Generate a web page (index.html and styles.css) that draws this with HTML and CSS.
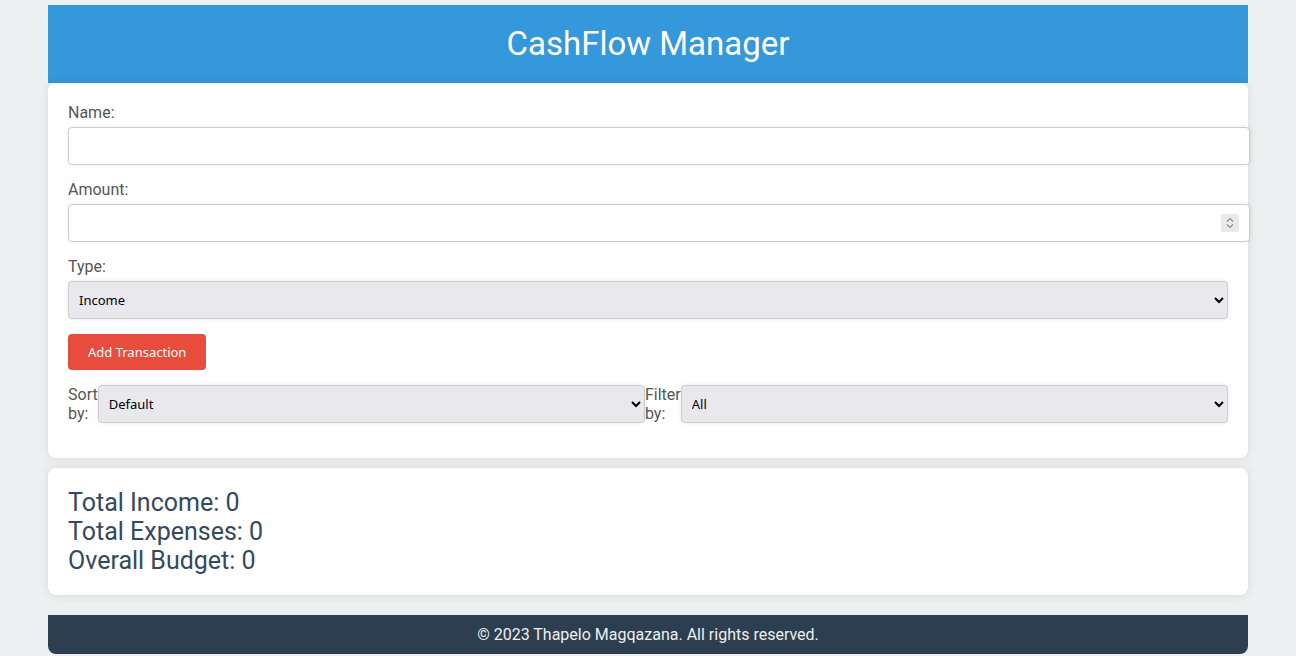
FILE: index.html
```html
<!DOCTYPE html>
<html lang="en">
<head>
<meta charset="utf-8">
<title>CashFlow Manager</title>
<link rel="stylesheet" href="styles.css">
</head>
<body>
<div class="container">
  <header class="header">
    <h1>CashFlow Manager</h1>
  </header>
  <section class="card form-card">
    <label class="field-label" for="name">Name:</label>
    <input class="field" id="name" type="text">
    <label class="field-label" for="amount">Amount:</label>
    <div class="number-wrap">
      <input class="field" id="amount" type="number">
      <span class="spinner" aria-hidden="true">
        <svg width="18" height="18" viewBox="0 0 18 18">
          <path d="M6 7.5 L9 4.5 L12 7.5" fill="none" stroke="#8a8a8a" stroke-width="1.2"/>
          <path d="M6 10.5 L9 13.5 L12 10.5" fill="none" stroke="#8a8a8a" stroke-width="1.2"/>
        </svg>
      </span>
    </div>
    <label class="field-label" for="type">Type:</label>
    <select class="field" id="type">
      <option>Income</option>
      <option>Expense</option>
    </select>
    <button class="add-btn" type="button">Add Transaction</button>
    <div class="controls">
      <label class="ctrl-label" for="sort">Sort by:</label>
      <select class="field" id="sort"><option>Default</option></select>
      <label class="ctrl-label" for="filter">Filter by:</label>
      <select class="field" id="filter"><option>All</option></select>
    </div>
  </section>
  <section class="card summary">
    <div class="summary-line">Total Income: 0</div>
    <div class="summary-line">Total Expenses: 0</div>
    <div class="summary-line">Overall Budget: 0</div>
  </section>
  <footer class="footer">© 2023 Thapelo Magqazana. All rights reserved.</footer>
</div>
</body>
</html>
```
FILE: styles.css
```css
html, body {
  margin: 0;
  padding: 0;
}
body {
  background: #ecf0f1;
  font-family: Roboto, "Liberation Sans", sans-serif;
  color: #555;
}
.container {
  width: 1200px;
  margin: 5px auto 0;
}
.header {
  background: #3498db;
  color: #fff;
  text-align: center;
  padding: 20px 0;
}
.header h1 {
  margin: 0;
  font-size: 33px;
  font-weight: 400;
  line-height: 38px;
}
.card {
  background: #fff;
  border-radius: 8px;
  box-shadow: 0 0 10px rgba(0, 0, 0, 0.1);
  padding: 20px;
}
.field-label {
  display: block;
  font-size: 16px;
  line-height: 19px;
  margin-bottom: 5px;
}
.field {
  display: block;
  width: 100%;
  padding: 10px;
  margin-bottom: 15px;
  border: 1px solid #ccc;
  border-radius: 4px;
  box-shadow: 0 0 5px rgba(0, 0, 0, 0.08);
  font-family: "Noto Sans", "Open Sans", sans-serif;
  font-size: 13px;
  line-height: 16px;
  color: #000;
  background: #fff;
}
select.field {
  padding: 8px 6px;
  height: 38px;
  background: #e9e9ed;
}
.number-wrap {
  position: relative;
}
input[type=number] {
  -moz-appearance: textfield;
}
input[type=number]::-webkit-inner-spin-button,
input[type=number]::-webkit-outer-spin-button {
  -webkit-appearance: none;
  margin: 0;
}
.spinner {
  position: absolute;
  top: 10px;
  right: -11px;
  width: 18px;
  height: 18px;
  background: #e9e9ed;
  border-radius: 2px;
  display: flex;
}
.add-btn {
  display: block;
  background: #e74c3c;
  color: #fff;
  border: none;
  border-radius: 4px;
  padding: 10px 20px;
  margin-bottom: 15px;
  font-family: "Noto Sans", "Open Sans", sans-serif;
  font-size: 13px;
  line-height: 16px;
  cursor: pointer;
}
.controls {
  display: flex;
}
.ctrl-label {
  font-size: 16px;
  line-height: 19px;
}
.summary {
  margin-top: 10px;
  color: #34495e;
}
.summary-line {
  font-size: 25px;
  font-weight: 400;
  line-height: 29px;
}
.footer {
  margin-top: 20px;
  background: #2c3e50;
  color: #ecf0f1;
  text-align: center;
  padding: 10px 0;
  font-size: 16px;
  line-height: 19px;
  border-radius: 0 0 8px 8px;
}
```
